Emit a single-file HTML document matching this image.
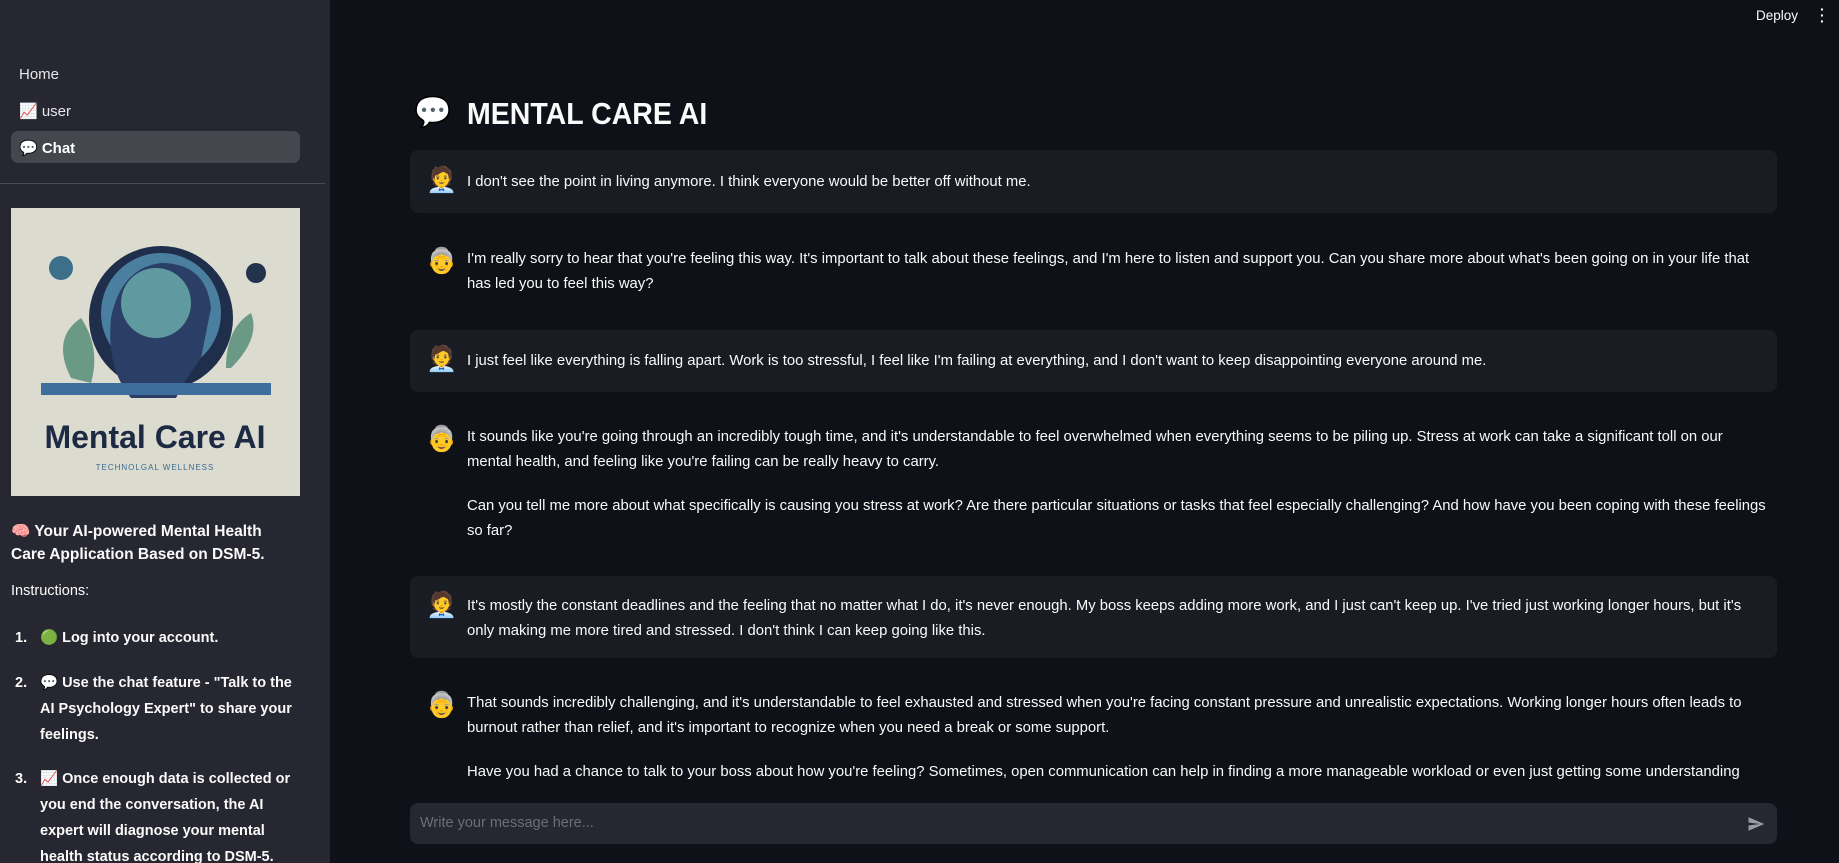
<!DOCTYPE html>
<html><head><meta charset="utf-8"><style>
*{margin:0;padding:0;box-sizing:border-box}
html,body{width:1839px;height:863px;overflow:hidden;background:#0e1117}
body{font-family:"Liberation Sans","Noto Sans CJK SC",sans-serif;color:#fafafa;position:relative}
.sb{position:absolute;left:0;top:0;width:330px;height:863px;background:#262730}
.nav{position:absolute;left:19px;font-size:15px;color:#e6e6ea}
.hl{position:absolute;left:11px;top:131px;width:289px;height:32px;background:#45474f;border-radius:7px}
.div{position:absolute;left:0;top:183px;width:325px;height:1px;background:#4a4b55}
.img{position:absolute;left:11px;top:208px;width:289px;height:288px;background:#dcdbd0;overflow:hidden}
.sbt{position:absolute;left:11px;font-size:15px}
.b{font-weight:bold}
.num{position:absolute;left:15px;font-size:14.5px;font-weight:bold}
.li{position:absolute;left:40px;font-size:14.5px;font-weight:bold;line-height:26px;width:260px}
.msg{position:absolute;left:410px;width:1367px;border-radius:8px}
.bg{background:#1a1c24}
.t{position:absolute;left:467px;font-size:14.85px;line-height:25px;width:1300px;white-space:nowrap}
.av{position:absolute;left:426px;font-size:25px;line-height:30px}
</style></head><body>
<div class="sb">
<div class="nav" style="top:66px">Home</div>
<div class="nav" style="top:102px">📈 user</div>
<div class="hl"></div>
<div class="nav b" style="top:139px;color:#fff">💬 Chat</div>
<div class="div"></div>
<div class="img">
<svg width="289" height="288" viewBox="0 0 289 288">
<circle cx="150" cy="110" r="72" fill="#1f2e4a"/>
<circle cx="150" cy="105" r="60" fill="#4a7fa0"/>
<path d="M100 110 Q110 60 150 55 Q195 55 200 100 L190 150 Q175 170 165 190 L120 190 Q95 160 100 110Z" fill="#2b3f66"/>
<circle cx="145" cy="95" r="35" fill="#5e9aa0"/>
<circle cx="50" cy="60" r="12" fill="#3c6f8a"/><circle cx="245" cy="65" r="10" fill="#23324d"/>
<path d="M60 170 Q40 130 70 110 Q90 140 80 175Z" fill="#6a9a86"/>
<path d="M220 160 Q250 130 240 105 Q215 120 215 160Z" fill="#6a9a86"/>
<rect x="30" y="175" width="230" height="12" fill="#3f6e9c"/>
<text x="144" y="240" text-anchor="middle" font-family="Liberation Sans" font-weight="bold" font-size="32" fill="#1d2a44">Mental Care AI</text>
<text x="144" y="262" text-anchor="middle" font-family="Liberation Sans" font-size="8" fill="#3b6c8e" letter-spacing="1">TECHNOLGAL WELLNESS</text>
</svg></div>
<div class="sbt b" style="top:520px;font-size:15.5px;line-height:23px;width:275px">🧠 Your AI-powered Mental Health Care Application Based on DSM-5.</div>
<div class="sbt" style="top:583px;font-size:14.5px">Instructions:</div>
<div class="num" style="top:630px">1.</div><div class="li" style="top:625px">🟢 Log into your account.</div>
<div class="num" style="top:675px">2.</div><div class="li" style="top:670px">💬 Use the chat feature - "Talk to the AI Psychology Expert" to share your feelings.</div>
<div class="num" style="top:771px">3.</div><div class="li" style="top:766px">📈 Once enough data is collected or you end the conversation, the AI expert will diagnose your mental health status according to DSM-5.</div>
</div>
<div style="position:absolute;left:1756px;top:8px;font-size:13.5px">Deploy</div>
<div style="position:absolute;left:1820px;top:6px;font-size:14px;line-height:6px;font-weight:bold">·<br>·<br>·</div>
<div style="position:absolute;left:414px;top:95px;font-size:30px">💬</div>
<div style="position:absolute;left:467px;top:96px;font-size:31px;font-weight:bold;transform:scaleX(0.92);transform-origin:left">MENTAL CARE AI</div>

<div class="msg bg" style="top:150px;height:63px"></div>
<div class="av" style="top:165px">🧑‍💼</div>
<div class="t" style="top:170px">I don't see the point in living anymore. I think everyone would be better off without me.</div>

<div class="av" style="top:246px">👵</div>
<div class="t" style="top:247px">I'm really sorry to hear that you're feeling this way. It's important to talk about these feelings, and I'm here to listen and support you. Can you share more about what's been going on in your life that<br>has led you to feel this way?</div>

<div class="msg bg" style="top:330px;height:62px"></div>
<div class="av" style="top:344px">🧑‍💼</div>
<div class="t" style="top:349px">I just feel like everything is falling apart. Work is too stressful, I feel like I'm failing at everything, and I don't want to keep disappointing everyone around me.</div>

<div class="av" style="top:424px">👵</div>
<div class="t" style="top:425px">It sounds like you're going through an incredibly tough time, and it's understandable to feel overwhelmed when everything seems to be piling up. Stress at work can take a significant toll on our<br>mental health, and feeling like you're failing can be really heavy to carry.</div>
<div class="t" style="top:494px">Can you tell me more about what specifically is causing you stress at work? Are there particular situations or tasks that feel especially challenging? And how have you been coping with these feelings<br>so far?</div>

<div class="msg bg" style="top:576px;height:82px"></div>
<div class="av" style="top:590px">🧑‍💼</div>
<div class="t" style="top:594px">It's mostly the constant deadlines and the feeling that no matter what I do, it's never enough. My boss keeps adding more work, and I just can't keep up. I've tried just working longer hours, but it's<br>only making me more tired and stressed. I don't think I can keep going like this.</div>

<div class="av" style="top:690px">👵</div>
<div class="t" style="top:691px">That sounds incredibly challenging, and it's understandable to feel exhausted and stressed when you're facing constant pressure and unrealistic expectations. Working longer hours often leads to<br>burnout rather than relief, and it's important to recognize when you need a break or some support.</div>
<div class="t" style="top:760px">Have you had a chance to talk to your boss about how you're feeling? Sometimes, open communication can help in finding a more manageable workload or even just getting some understanding</div>

<div style="position:absolute;left:330px;top:788px;width:1509px;height:75px;background:#0e1117"></div>
<div class="msg" style="top:803px;height:41px;background:#262730"></div>
<div style="position:absolute;left:420px;top:815px;font-size:14.5px;color:#6b6d78">Write your message here...</div>
<svg style="position:absolute;left:1747px;top:815px" width="18" height="18" viewBox="0 0 24 24"><path d="M2 21L23 12 2 3v7l15 2-15 2z" fill="#9a9ca5"/></svg>
</body></html>
